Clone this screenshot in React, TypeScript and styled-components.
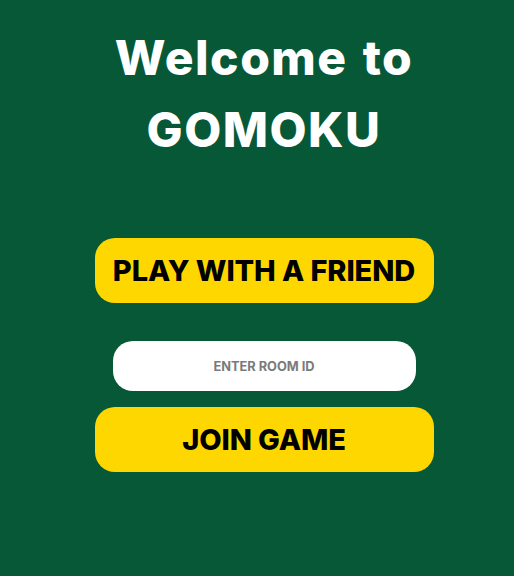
import React from "react";
import styled, { createGlobalStyle } from "styled-components";

const Global = createGlobalStyle`
  html, body { margin: 0; padding: 0; background: #065837; }
  body { font-family: "Inter", "Open Sans", sans-serif; }
`;

const Page = styled.div`
  min-height: 576px;
  box-sizing: border-box;
  padding: 22px 0 0 14px;
  display: flex;
  flex-direction: column;
  align-items: center;
`;

const Title = styled.h1`
  margin: 0;
  color: #ffffff;
  font-family: "Inter", sans-serif;
  font-weight: 800;
  font-size: 48px;
  line-height: 72px;
  text-align: center;
  letter-spacing: 1.5px;
  word-spacing: 3px;
`;

const Actions = styled.div`
  margin-top: 72px;
  display: flex;
  flex-direction: column;
  align-items: center;
`;

const YellowButton = styled.button<{ $mt?: number }>`
  width: 339px;
  height: 65px;
  margin-top: ${(p) => p.$mt ?? 0}px;
  border: none;
  border-radius: 20px;
  background: #ffd700;
  color: #000000;
  font-family: "Inter", sans-serif;
  font-weight: 800;
  font-size: 29px;
  letter-spacing: -0.1px;
  cursor: pointer;
  display: flex;
  align-items: center;
  justify-content: center;
  padding: 0;
`;

const RoomInput = styled.input`
  width: 303px;
  height: 50px;
  margin-top: 38px;
  box-sizing: border-box;
  border: none;
  border-radius: 20px;
  background: #ffffff;
  text-align: center;
  font-family: "Inter", sans-serif;
  font-weight: 700;
  font-size: 12.8px;
  outline: none;
  &::placeholder {
    color: #7a7a7a;
    opacity: 1;
  }
`;

export default function App() {
  return (
    <>
      <Global />
      <Page>
        <Title>
          Welcome to
          <br />
          GOMOKU
        </Title>
        <Actions>
          <YellowButton>PLAY WITH A FRIEND</YellowButton>
          <RoomInput placeholder="ENTER ROOM ID" />
          <YellowButton $mt={16}>JOIN GAME</YellowButton>
        </Actions>
      </Page>
    </>
  );
}
